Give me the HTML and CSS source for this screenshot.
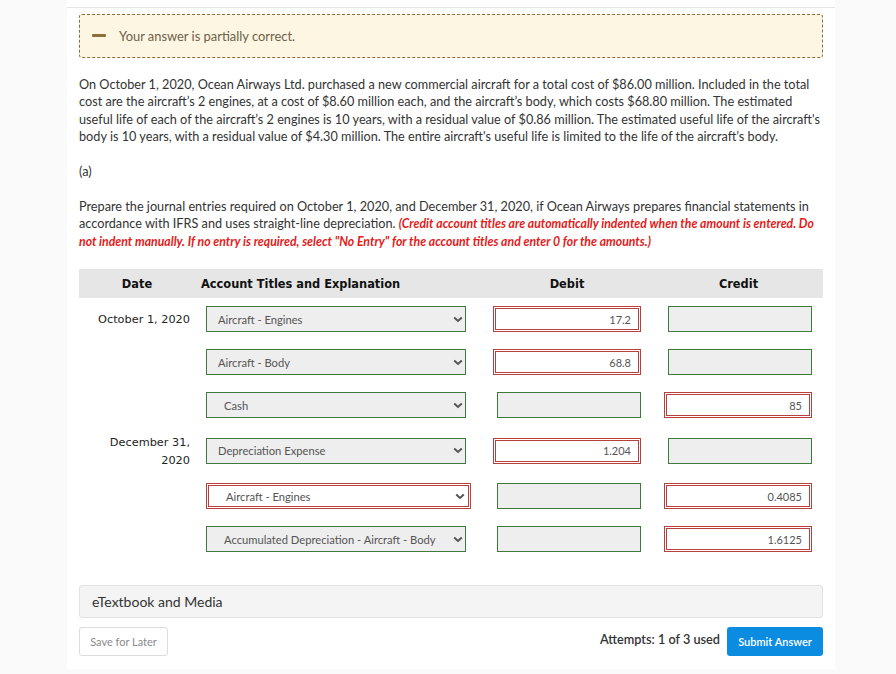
FILE: index.html
```html
<!DOCTYPE html>
<html lang="en">
<head>
<meta charset="utf-8">
<title>Journal entries</title>
<link rel="stylesheet" href="styles.css">
</head>
<body>
<div class="panel">
  <div class="topline"></div>
  <div class="content">
    <div class="feedback">
      <span class="minus"></span>
      <span class="feedback-text">Your answer is partially correct.</span>
    </div>

    <p class="para">On October 1, 2020, Ocean Airways Ltd. purchased a new commercial aircraft for a total cost of $86.00 million. Included in the total cost are the aircraft’s 2 engines, at a cost of $8.60 million each, and the aircraft’s body, which costs $68.80 million. The estimated useful life of each of the aircraft’s 2 engines is 10 years, with a residual value of $0.86 million. The estimated useful life of the aircraft's body is 10 years, with a residual value of $4.30 million. The entire aircraft's useful life is limited to the life of the aircraft’s body.</p>

    <p class="para">(a)</p>

    <p class="para">Prepare the journal entries required on October 1, 2020, and December 31, 2020, if Ocean Airways prepares financial statements in accordance with IFRS and uses straight-line depreciation. <em class="warn">(Credit account titles are automatically indented when the amount is entered. Do not indent manually. If no entry is required, select "No Entry" for the account titles and enter 0 for the amounts.)</em></p>

    <div class="journal">
      <div class="jhead">
        <div class="h-date">Date</div>
        <div class="h-acct">Account Titles and Explanation</div>
        <div class="h-num">Debit</div>
        <div class="h-num">Credit</div>
      </div>

      <div class="jrow">
        <div class="date">October 1, 2020</div>
        <div class="acct"><div class="sel ok"><span>Aircraft - Engines</span><svg class="chev" width="10" height="7" viewBox="0 0 10 7"><path d="M1.2 1.5 L5 5 L8.8 1.5" fill="none" stroke="#555" stroke-width="2"/></svg></div></div>
        <div class="num"><input class="amt bad" value="17.2" readonly></div>
        <div class="num cr"><input class="amt ok" value="" readonly></div>
      </div>

      <div class="jrow">
        <div class="date"></div>
        <div class="acct"><div class="sel ok"><span>Aircraft - Body</span><svg class="chev" width="10" height="7" viewBox="0 0 10 7"><path d="M1.2 1.5 L5 5 L8.8 1.5" fill="none" stroke="#555" stroke-width="2"/></svg></div></div>
        <div class="num"><input class="amt bad" value="68.8" readonly></div>
        <div class="num cr"><input class="amt ok" value="" readonly></div>
      </div>

      <div class="jrow">
        <div class="date"></div>
        <div class="acct"><div class="sel ok indent"><span>Cash</span><svg class="chev" width="10" height="7" viewBox="0 0 10 7"><path d="M1.2 1.5 L5 5 L8.8 1.5" fill="none" stroke="#555" stroke-width="2"/></svg></div></div>
        <div class="num"><input class="amt ok" value="" readonly></div>
        <div class="num cr"><input class="amt bad" value="85" readonly></div>
      </div>

      <div class="jrow">
        <div class="date two">December 31,<br>2020</div>
        <div class="acct"><div class="sel ok"><span>Depreciation Expense</span><svg class="chev" width="10" height="7" viewBox="0 0 10 7"><path d="M1.2 1.5 L5 5 L8.8 1.5" fill="none" stroke="#555" stroke-width="2"/></svg></div></div>
        <div class="num"><input class="amt bad" value="1.204" readonly></div>
        <div class="num cr"><input class="amt ok" value="" readonly></div>
      </div>

      <div class="jrow">
        <div class="date"></div>
        <div class="acct"><div class="sel bad indent"><span>Aircraft - Engines</span><svg class="chev" width="10" height="7" viewBox="0 0 10 7"><path d="M1.2 1.5 L5 5 L8.8 1.5" fill="none" stroke="#555" stroke-width="2"/></svg></div></div>
        <div class="num"><input class="amt ok" value="" readonly></div>
        <div class="num cr"><input class="amt bad" value="0.4085" readonly></div>
      </div>

      <div class="jrow">
        <div class="date"></div>
        <div class="acct"><div class="sel ok indent"><span>Accumulated Depreciation - Aircraft - Body</span><svg class="chev" width="10" height="7" viewBox="0 0 10 7"><path d="M1.2 1.5 L5 5 L8.8 1.5" fill="none" stroke="#555" stroke-width="2"/></svg></div></div>
        <div class="num"><input class="amt ok" value="" readonly></div>
        <div class="num cr"><input class="amt bad" value="1.6125" readonly></div>
      </div>
    </div>

    <div class="media">eTextbook and Media</div>

    <div class="actions">
      <button class="btn-save" type="button">Save for Later</button>
      <div class="actions-right">
        <span class="attempts">Attempts: 1 of 3 used</span>
        <button class="btn-submit" type="button">Submit Answer</button>
      </div>
    </div>
  </div>
</div>
</body>
</html>
```

FILE: styles.css
```css
* { box-sizing: border-box; }

html, body {
  margin: 0;
  padding: 0;
  background: #fafafa;
}

body {
  font-family: Lato, "Open Sans", sans-serif;
  color: #333;
}

.panel {
  width: 768px;
  margin-left: 67px;
  background: #fff;
  min-height: 668px;
  padding-top: 7px;
}

.topline {
  height: 1px;
  background: #e6e6e6;
}

.content {
  padding: 6px 12px 13px 12px;
}

.feedback {
  height: 44px;
  border: 1px dashed #8c6d3c;
  border-radius: 3px;
  background: #fdf6e2;
  display: flex;
  align-items: center;
  padding-left: 12px;
}

.minus {
  width: 14px;
  height: 3px;
  background: #8d6e3d;
  border-radius: 1px;
  margin-right: 13px;
  margin-top: -2px;
}

.feedback-text {
  font-size: 12.9px;
  color: #6e6048;
}

.para {
  font-size: 12.7px;
  line-height: 17.4px;
  margin: 17.5px 0 0 0;
  color: #333;
}

.para:first-of-type { margin-top: 18px; }

.warn {
  color: #e31b1b;
  font-weight: 700;
  font-style: italic;
  font-size: 12.25px;
}

.journal {
  margin-top: 19px;
}

.jhead {
  display: grid;
  grid-template-columns: 120px 280px 174px 169px;
  height: 29px;
  align-items: center;
  background: #e6e6e6;
  font-family: "DejaVu Sans", Verdana, sans-serif;
  font-weight: 700;
  font-size: 11.4px;
  color: #111;
}

.h-date { text-align: center; padding-right: 4px; }
.h-acct { padding-left: 2px; }
.h-num { text-align: center; padding-left: 2px; }

.jrow {
  display: grid;
  grid-template-columns: 120px 280px 174px 169px;
  align-items: center;
  padding: 8px 0 9px;
}

.jrow:first-of-type { padding-top: 9px; }

.date {
  font-family: "DejaVu Sans", Verdana, sans-serif;
  font-size: 11.3px;
  line-height: 18px;
  text-align: right;
  padding-right: 9px;
  padding-top: 2px;
  color: #222;
}

.date.two { margin: -3.5px 0; }

.acct {
  padding-left: 7px;
}

.sel {
  width: 260px;
  height: 26px;
  display: flex;
  align-items: center;
  justify-content: space-between;
  padding: 0 2px 0 11px;
  font-size: 11.2px;
  color: #555;
  background: #eee;
}

.sel.ok { border: 1px solid #3e7b3b; }

.sel.bad {
  width: 265px;
  border: 3px double #b5403d;
  background: #fff;
  padding-left: 17px;
  padding-right: 3px;
}

.sel.indent { padding-left: 17px; }
.sel.bad.indent { padding-left: 17px; }

.chev { flex: none; }

.num {
  display: flex;
  justify-content: flex-end;
  padding-right: 12px;
}

.num.cr { padding-right: 10px; }

.amt {
  height: 26px;
  width: 144px;
  font-family: Lato, sans-serif;
  font-size: 11px;
  color: #555;
  text-align: right;
  padding: 0 10px 0 4px;
  margin: 0;
  outline: none;
}

.amt.ok {
  border: 1px solid #3e7b3b;
  background: #eee;
}

.amt.bad {
  width: 148px;
  border: 3px double #b5403d;
  background: #fff;
  padding-right: 7px;
}

.media {
  margin-top: 24px;
  height: 33px;
  border: 1px solid #e2e2e2;
  border-radius: 3px;
  background: #f4f4f4;
  display: flex;
  align-items: center;
  padding-left: 12px;
  font-size: 14px;
  color: #333;
}

.actions {
  margin-top: 8px;
  display: flex;
  justify-content: space-between;
  align-items: center;
}

.btn-save {
  width: 89px;
  height: 29px;
  border: 1px solid #dcdcdc;
  border-radius: 3px;
  background: #fff;
  font-family: Lato, sans-serif;
  font-size: 11px;
  color: #8a8a8a;
  padding: 0;
  margin-top: 1px;
}

.actions-right {
  display: flex;
  align-items: center;
  gap: 7px;
}

.attempts {
  font-size: 12.7px;
  font-weight: 600;
  color: #333;
  margin-top: -4px;
}

.btn-submit {
  width: 96px;
  height: 29px;
  border: none;
  border-radius: 3px;
  background: #0b8ce0;
  color: #fff;
  font-family: Lato, sans-serif;
  font-size: 11px;
  font-weight: 600;
  padding: 0;
}
```
